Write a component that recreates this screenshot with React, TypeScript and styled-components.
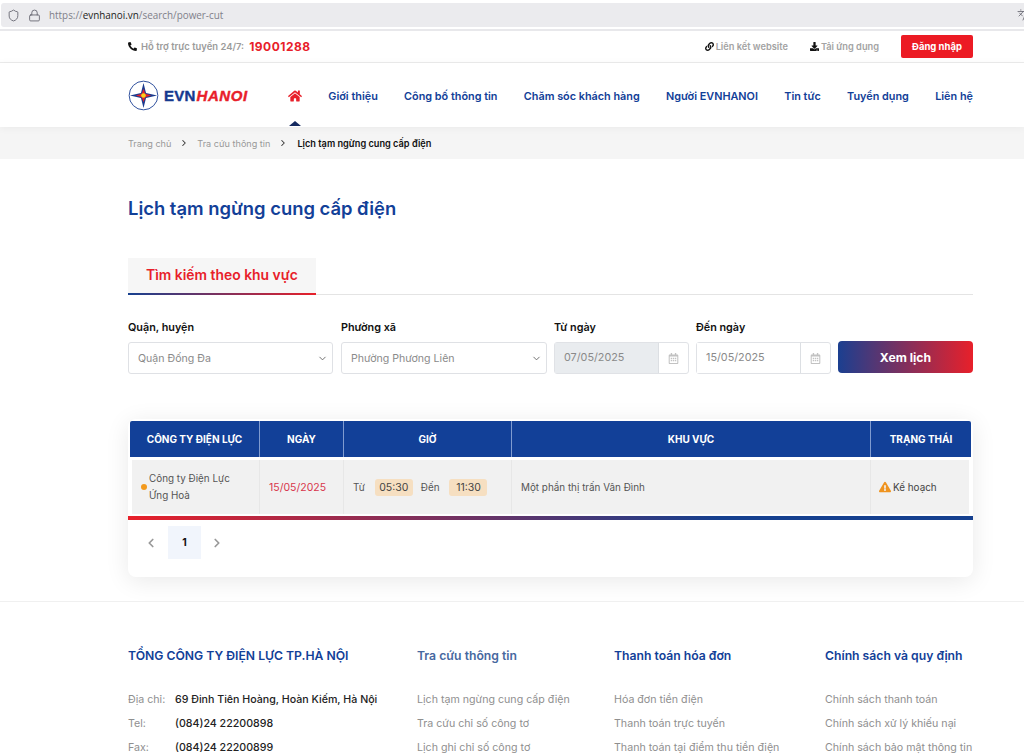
import React from 'react'
import styled, { createGlobalStyle } from 'styled-components'
import { Languages, Lock, Shield, ChevronDown, ChevronLeft, ChevronRight } from 'lucide-react'
import { FaDownload, FaExclamationTriangle, FaHome, FaLink, FaPhoneAlt, FaRegCalendarAlt } from 'react-icons/fa'

const BLUE = '#124098'
const RED = '#e8202a'

const GlobalStyle = createGlobalStyle`
  html, body {
    margin: 0;
    height: 756px;
    overflow: hidden;
    background: #fff;
    font-family: Inter, "Noto Sans", sans-serif;
  }
  * { box-sizing: border-box; }
`

const BrowserBar = styled.div`
  height: 31px;
  padding-top: 3px;
  background: #fff;
  border-bottom: 2px solid #e8e8eb;
`

const UrlField = styled.div`
  height: 24px;
  display: flex;
  align-items: center;
  gap: 8px;
  padding-left: 6px;
  margin-left: 1px;
  background: #ebebee;
  color: #5b5b66;
  border-radius: 3px 0 0 3px;
`

const UrlText = styled.span`
  flex: 1;
  font-family: "Open Sans", "Noto Sans", sans-serif;
  font-size: 9.9px;
  color: #80808a;
  b { font-weight: 400; color: #1c1c22; }
`

const TranslateIcon = styled(Languages)`
  margin-right: -5px;
`

const Container = styled.div`
  width: 845px;
  margin-left: 128px;
`

const TopBar = styled.div`
  border-bottom: 1px solid #ececec;
`

const TopInner = styled(Container)`
  height: 31px;
  display: flex;
  align-items: center;
  justify-content: space-between;
`

const Hotline = styled.div`
  display: flex;
  align-items: center;
  gap: 3px;
  font-size: 9.45px;
  font-weight: 600;
  color: #9b9b9b;
  svg { margin-right: 1px; }
`

const HotNumber = styled.span`
  margin-left: 2px;
  color: ${RED};
  font-size: 12px;
  font-weight: 700;
  letter-spacing: 0.5px;
`

const TopLinks = styled.div`
  display: flex;
  align-items: center;
`

const TopLink = styled.span`
  display: inline-flex;
  align-items: center;
  gap: 2px;
  margin-right: 22px;
  font-size: 9.25px;
  font-weight: 600;
  color: #a3a3a3;
  svg { color: #111; }
`

const LoginButton = styled.span`
  width: 72px;
  height: 23px;
  display: flex;
  align-items: center;
  justify-content: center;
  border-radius: 2px;
  background: #ec1b24;
  color: #fff;
  font-size: 9.5px;
  font-weight: 700;
`

const NavBar = styled.div`
  position: relative;
  z-index: 1;
  box-shadow: 0 1px 8px rgba(0, 0, 0, 0.05);
`

const NavInner = styled(Container)`
  height: 64px;
  display: flex;
  align-items: center;
`

const Logo = styled.div`
  display: flex;
  align-items: center;
  gap: 5px;
  width: 160px;
  font-family: "Liberation Sans", sans-serif;
  font-size: 15px;
  font-weight: 700;
  letter-spacing: 0.2px;
  -webkit-text-stroke: 0.4px currentColor;
  color: #16398f;
  i { color: ${RED}; margin-left: 1px; letter-spacing: 0.6px; }
`

const NavList = styled.nav`
  flex: 1;
  display: flex;
  align-items: center;
  justify-content: space-between;
  margin-top: 2px;
`

const NavItem = styled.span`
  font-size: 10.85px;
  font-weight: 600;
  color: ${BLUE};
  white-space: nowrap;
`

const HomeItem = styled.span`
  position: relative;
  display: flex;
  color: ${RED};
  &::after {
    content: '';
    position: absolute;
    left: 1px;
    top: 32px;
    border: 6px solid transparent;
    border-top: 0;
    border-bottom: 5px solid #14295f;
  }
`

const Crumbs = styled.div`
  height: 32px;
  background: #f5f5f5;
`

const CrumbInner = styled(Container)`
  height: 32px;
  display: flex;
  align-items: center;
  gap: 8px;
  font-size: 9.1px;
  color: #999;
  svg { color: #333; }
  b { color: #111; font-weight: 600; font-size: 9.2px; margin-left: 1px; }
`

const Title = styled.h1`
  margin: 37px 0 38px;
  height: 24px;
  line-height: 24px;
  font-size: 18.4px;
  font-weight: 600;
  color: ${BLUE};
`

const TabRow = styled.div`
  height: 37px;
  border-bottom: 1px solid #e4e4e4;
`

const Tab = styled.div`
  position: relative;
  width: 188px;
  height: 37px;
  padding-left: 18px;
  line-height: 34px;
  background: #f6f6f6;
  color: ${RED};
  font-size: 13.9px;
  font-weight: 600;
  &::after {
    content: '';
    position: absolute;
    left: 0;
    right: 0;
    bottom: 0;
    height: 2px;
    background: linear-gradient(90deg, #16408f, ${RED});
  }
`

const Filters = styled.div`
  display: flex;
  align-items: flex-end;
  margin-top: 26px;
`

const Field = styled.div<{ $width: number; $gap: number }>`
  width: ${({ $width }) => $width}px;
  margin-right: ${({ $gap }) => $gap}px;
`

const FieldLabel = styled.div`
  height: 15px;
  margin-bottom: 6px;
  line-height: 14px;
  font-size: 10.8px;
  font-weight: 600;
  color: #111;
`

const SelectBox = styled.div`
  height: 32px;
  display: flex;
  align-items: center;
  justify-content: space-between;
  padding: 0 4px 0 9px;
  border: 1px solid #dfe1e5;
  border-radius: 3px;
  font-size: 10.6px;
  color: #8a8a8a;
  svg { color: #666; }
`

const DateBox = styled.div`
  height: 32px;
  display: flex;
  border: 1px solid #e0e2e6;
  border-radius: 3px;
`

const DateValue = styled.div<{ $disabled?: boolean }>`
  flex: 1;
  padding-left: 9px;
  line-height: 30px;
  font-size: 10.8px;
  color: #8a8a8a;
  background: ${({ $disabled }) => ($disabled ? '#e9ecef' : '#fff')};
`

const DateIcon = styled.div`
  width: 30px;
  display: flex;
  align-items: center;
  justify-content: center;
  border-left: 1px solid #dcdfe3;
  color: #c2c2c2;
`

const SearchButton = styled.div`
  width: 135px;
  height: 32px;
  margin-bottom: 1px;
  display: flex;
  align-items: center;
  justify-content: center;
  border-radius: 4px;
  background: linear-gradient(90deg, #1b3f90, ${RED});
  color: #fff;
  font-size: 12.2px;
  font-weight: 700;
`

const ResultCard = styled.div`
  margin-top: 45px;
  height: 158px;
  padding-top: 2px;
  border-radius: 8px;
  box-shadow: 0 4px 24px rgba(0, 0, 0, 0.09);
`

const Table = styled.div`
  margin: 0 2px;
`

const HeadRow = styled.div`
  display: grid;
  grid-template-columns: 130px 84px 168px 359px 1fr;
  height: 36px;
  background: ${BLUE};
  border-radius: 2px 2px 0 0;
`

const HeadCell = styled.div`
  display: flex;
  align-items: center;
  justify-content: center;
  border-right: 1px solid #7f9bd0;
  color: #fff;
  font-size: 10px;
  font-weight: 700;
  &:last-child { border-right: 0; }
`

const BodyRow = styled.div`
  display: grid;
  grid-template-columns: 128px 84px 168px 359px 1fr;
  height: 54px;
  margin: 3px 2px 0;
  background: #f1f1f1;
  font-size: 9.9px;
  color: #555;
`

const BodyCell = styled.div`
  display: flex;
  align-items: center;
  padding-left: 9px;
  border-right: 1px solid #e7e7e7;
  &:last-child { border-right: 0; }
`

const CompanyCell = styled(BodyCell)`
  gap: 2px;
  line-height: 17px;
`

const Dot = styled.span`
  flex: none;
  width: 6px;
  height: 6px;
  border-radius: 50%;
  background: #f39a1d;
`

const DateText = styled.span`
  color: #d8354a;
  font-size: 10.5px;
`

const TimeChip = styled.span`
  margin: 0 8px 0 10px;
  padding: 2px 0;
  width: 38px;
  text-align: center;
  border-radius: 3px;
  background: #f6dfc1;
  color: #444;
  font-size: 10.5px;
`

const StatusCell = styled(BodyCell)`
  gap: 2px;
  padding-left: 8px;
  color: #444;
  svg { color: #ef9420; }
`

const RainbowBar = styled.div`
  height: 4px;
  margin-top: 2px;
  background: linear-gradient(90deg, ${RED}, #15408f 70%);
`

const Pager = styled.div`
  display: flex;
  align-items: center;
  margin: 6px 0 0 16px;
  height: 33px;
  color: #999;
`

const PageNumber = styled.span`
  width: 33px;
  height: 33px;
  margin: 0 9px 0 10px;
  display: flex;
  align-items: center;
  justify-content: center;
  background: #f1f5fc;
  color: #111;
  font-size: 10.5px;
  font-weight: 700;
`

const Footer = styled.footer`
  margin-top: 24px;
  border-top: 1px solid #f0f0f0;
`

const FooterGrid = styled(Container)`
  display: grid;
  grid-template-columns: 289px 197px 211px 1fr;
  padding-top: 46px;
`

const FooterTitle = styled.div<{ $light?: boolean }>`
  height: 16px;
  margin-bottom: 24px;
  line-height: 16px;
  font-size: 12.2px;
  font-weight: 600;
  white-space: nowrap;
  color: ${({ $light }) => ($light ? '#47689f' : BLUE)};
`

const FooterLine = styled.div`
  height: 24px;
  line-height: 24px;
  font-size: 10.65px;
  color: #8f8f8f;
  white-space: nowrap;
`

const ContactLine = styled(FooterLine)`
  display: grid;
  grid-template-columns: 47px 1fr;
  b { font-weight: 500; color: #222; }
`

const contacts = [
  ['Địa chỉ:', '69 Đinh Tiên Hoàng, Hoàn Kiếm, Hà Nội'],
  ['Tel:', '(084)24 22200898'],
  ['Fax:', '(084)24 22200899'],
]

const footerColumns = [
  {
    title: 'Tra cứu thông tin',
    light: true,
    links: ['Lịch tạm ngừng cung cấp điện', 'Tra cứu chỉ số công tơ', 'Lịch ghi chỉ số công tơ'],
  },
  {
    title: 'Thanh toán hóa đơn',
    links: ['Hóa đơn tiền điện', 'Thanh toán trực tuyến', 'Thanh toán tại điểm thu tiền điện'],
  },
  {
    title: 'Chính sách và quy định',
    links: ['Chính sách thanh toán', 'Chính sách xử lý khiếu nại', 'Chính sách bảo mật thông tin'],
  },
]

const navItems = [
  'Giới thiệu',
  'Công bố thông tin',
  'Chăm sóc khách hàng',
  'Người EVNHANOI',
  'Tin tức',
  'Tuyển dụng',
  'Liên hệ',
]

const LogoMark = () => (
  <svg width="31" height="31" viewBox="0 0 32 32">
    <circle cx="16" cy="16" r="14.8" fill="#fff" stroke="#2a4c9b" strokeWidth="1" />
    <path d="M16 3 L18.6 13.4 L30 16 L18.6 18.6 L16 29 L13.4 18.6 L2 16 L13.4 13.4 Z" fill="#1b3c8f" />
    <path d="M16 9 L17.8 14.2 L24 16 L17.8 17.8 L16 23 L14.2 17.8 L8 16 L14.2 14.2 Z" fill="#e3202c" />
    <circle cx="16" cy="16" r="2.4" fill="#f6d21c" />
  </svg>
)

export default function App() {
  return (
    <>
      <GlobalStyle />
      <BrowserBar>
        <UrlField>
          <Shield size={13} strokeWidth={1.5} />
          <Lock size={13} strokeWidth={1.5} />
          <UrlText>
            https://<b>evnhanoi.vn</b>/search/power-cut
          </UrlText>
          <TranslateIcon size={12} strokeWidth={1.5} />
        </UrlField>
      </BrowserBar>

      <TopBar>
        <TopInner>
          <Hotline>
            <FaPhoneAlt size={9} color="#111" />
            <span>Hỗ trợ trực tuyến 24/7:</span>
            <HotNumber>19001288</HotNumber>
          </Hotline>
          <TopLinks>
            <TopLink>
              <FaLink size={9} />
              Liên kết website
            </TopLink>
            <TopLink>
              <FaDownload size={9} />
              Tải ứng dụng
            </TopLink>
            <LoginButton>Đăng nhập</LoginButton>
          </TopLinks>
        </TopInner>
      </TopBar>

      <NavBar>
        <NavInner>
          <Logo>
            <LogoMark />
            <span>
              EVN<i>HANOI</i>
            </span>
          </Logo>
          <NavList>
            <HomeItem>
              <FaHome size={14} />
            </HomeItem>
            {navItems.map((item) => (
              <NavItem key={item}>{item}</NavItem>
            ))}
          </NavList>
        </NavInner>
      </NavBar>

      <Crumbs>
        <CrumbInner>
          <span>Trang chủ</span>
          <ChevronRight size={10} strokeWidth={2.5} />
          <span>Tra cứu thông tin</span>
          <ChevronRight size={10} strokeWidth={2.5} />
          <b>Lịch tạm ngừng cung cấp điện</b>
        </CrumbInner>
      </Crumbs>

      <Container>
        <Title>Lịch tạm ngừng cung cấp điện</Title>
        <TabRow>
          <Tab>Tìm kiếm theo khu vực</Tab>
        </TabRow>

        <Filters>
          <Field $width={205} $gap={8}>
            <FieldLabel>Quận, huyện</FieldLabel>
            <SelectBox>
              Quận Đống Đa
              <ChevronDown size={11} />
            </SelectBox>
          </Field>
          <Field $width={206} $gap={7}>
            <FieldLabel>Phường xã</FieldLabel>
            <SelectBox>
              Phường Phương Liên
              <ChevronDown size={11} />
            </SelectBox>
          </Field>
          <Field $width={135} $gap={7}>
            <FieldLabel>Từ ngày</FieldLabel>
            <DateBox>
              <DateValue $disabled>07/05/2025</DateValue>
              <DateIcon>
                <FaRegCalendarAlt size={11} />
              </DateIcon>
            </DateBox>
          </Field>
          <Field $width={135} $gap={7}>
            <FieldLabel>Đến ngày</FieldLabel>
            <DateBox>
              <DateValue>15/05/2025</DateValue>
              <DateIcon>
                <FaRegCalendarAlt size={11} />
              </DateIcon>
            </DateBox>
          </Field>
          <SearchButton>Xem lịch</SearchButton>
        </Filters>

        <ResultCard>
          <Table>
            <HeadRow>
              <HeadCell>CÔNG TY ĐIỆN LỰC</HeadCell>
              <HeadCell>NGÀY</HeadCell>
              <HeadCell>GIỜ</HeadCell>
              <HeadCell>KHU VỰC</HeadCell>
              <HeadCell>TRẠNG THÁI</HeadCell>
            </HeadRow>
            <BodyRow>
              <CompanyCell>
                <Dot />
                <span>
                  Công ty Điện Lực
                  <br />
                  Ứng Hoà
                </span>
              </CompanyCell>
              <BodyCell>
                <DateText>15/05/2025</DateText>
              </BodyCell>
              <BodyCell>
                Từ
                <TimeChip>05:30</TimeChip>
                Đến
                <TimeChip>11:30</TimeChip>
              </BodyCell>
              <BodyCell>Một phần thị trấn Vân Đình</BodyCell>
              <StatusCell>
                <FaExclamationTriangle size={12} />
                Kế hoạch
              </StatusCell>
            </BodyRow>
          </Table>
          <RainbowBar />
          <Pager>
            <ChevronLeft size={14} strokeWidth={3} />
            <PageNumber>1</PageNumber>
            <ChevronRight size={14} strokeWidth={3} />
          </Pager>
        </ResultCard>
      </Container>

      <Footer>
        <FooterGrid>
          <div>
            <FooterTitle>TỔNG CÔNG TY ĐIỆN LỰC TP.HÀ NỘI</FooterTitle>
            {contacts.map(([label, value]) => (
              <ContactLine key={label}>
                <span>{label}</span>
                <b>{value}</b>
              </ContactLine>
            ))}
          </div>
          {footerColumns.map((column) => (
            <div key={column.title}>
              <FooterTitle $light={column.light}>{column.title}</FooterTitle>
              {column.links.map((link) => (
                <FooterLine key={link}>{link}</FooterLine>
              ))}
            </div>
          ))}
        </FooterGrid>
      </Footer>
    </>
  )
}
